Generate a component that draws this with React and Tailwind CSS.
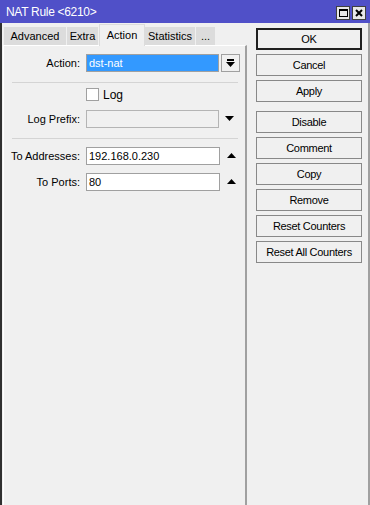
import React from "react";

const buttons = [
  ["OK", true],
  ["Cancel"],
  ["Apply"],
  null,
  ["Disable"],
  ["Comment"],
  ["Copy"],
  ["Remove"],
  ["Reset Counters"],
  ["Reset All Counters"],
];

const tabs = [
  { name: "Advanced", w: "w-[63px]" },
  { name: "Extra", w: "w-[32px]" },
  { name: "Action", w: "w-[46px]", active: true },
  { name: "Statistics", w: "w-[51px]" },
  { name: "...", w: "w-[20px]" },
];

function Up() {
  return (
    <svg width="9" height="6" viewBox="0 0 9 6" className="shrink-0">
      <path d="M0 5 L4.5 0 L9 5 Z" fill="#000" />
    </svg>
  );
}

function Down() {
  return (
    <svg width="9" height="6" viewBox="0 0 9 6" className="shrink-0">
      <path d="M0 0 L9 0 L4.5 5 Z" fill="#000" />
    </svg>
  );
}

function Row({ label, children }) {
  return (
    <div className="flex items-center h-[18px]">
      <div className="w-[77px] shrink-0 text-right pr-[1px] whitespace-nowrap">{label}</div>
      <div className="ml-[5px] flex items-center shrink-0">{children}</div>
    </div>
  );
}

export default function App() {
  return (
    <div
      className="w-[370px] h-[505px] bg-[#f0f0f0] flex flex-col text-[11px] text-black overflow-hidden"
      style={{ fontFamily: '"Liberation Sans", Arial, sans-serif' }}
    >
      {/* Title bar */}
      <div className="h-[23px] bg-[#5050c8] flex items-center justify-between pl-[6px] pr-[4px] shrink-0">
        <span className="text-white text-[12px] tracking-[-0.3px]">NAT Rule &lt;6210&gt;</span>
        <div className="flex gap-[2px] mt-[2px]">
          <div className="w-[14px] h-[14px] bg-[#e8e8e8] border border-[#404040] flex items-center justify-center">
            <div className="w-[9px] h-[8px] border border-black border-t-2" />
          </div>
          <div className="w-[14px] h-[14px] bg-[#e8e8e8] border border-[#404040] flex items-center justify-center">
            <svg width="8" height="8" viewBox="0 0 8 8">
              <path d="M1 1 L7 7 M7 1 L1 7" stroke="#000" strokeWidth="2" />
            </svg>
          </div>
        </div>
      </div>

      <div className="flex-1 flex border-r-2 border-[#a0a0a0]">
        {/* Left column */}
        <div className="w-[247px] shrink-0 flex flex-col border-l-2 border-[#303030]">
          {/* Tabs */}
          <div className="h-[22px] flex items-end pl-[2px] shrink-0">
            {tabs.map((t) =>
              t.active ? (
                <div
                  key={t.name}
                  className={`${t.w} h-[22px] bg-[#f0f0f0] border-t border-l border-r border-[#dcdcdc] flex items-center justify-center pb-[1px] relative -mb-[1px] z-10`}
                >
                  {t.name}
                </div>
              ) : (
                <div
                  key={t.name}
                  className={`${t.w} h-[18px] bg-[#dcdcdc] border-r border-[#f0f0f0] flex items-center justify-center`}
                >
                  {t.name}
                </div>
              )
            )}
          </div>

          {/* Panel */}
          <div className="flex-1 ml-[1px] border-t border-l border-white border-r-2 border-r-[#a0a0a0]">
            <div className="pt-[8px]">
              <Row label="Action:">
                <div className="w-[133px] h-[18px] bg-[#3399ff] border border-[#a0a0a0] text-white pl-[2px] leading-[16px]">
                  dst-nat
                </div>
                <div className="ml-[2px] w-[19px] h-[18px] border border-[#a0a0a0] flex items-center justify-center">
                  <svg width="9" height="9" viewBox="0 0 9 9">
                    <rect x="1" y="0" width="7" height="2" fill="#000" />
                    <path d="M0 3 L9 3 L4.5 8 Z" fill="#000" />
                  </svg>
                </div>
              </Row>

              <div className="h-px bg-[#d4d4d4] mt-[10px] ml-[8px] w-[226px]" />

              <div className="flex items-center mt-[5px] h-[13px]">
                <div className="ml-[82px] w-[13px] h-[13px] bg-white border border-[#a0a0a0]" />
                <span className="ml-[4px] text-[12px]">Log</span>
              </div>

              <div className="mt-[9px]">
                <Row label="Log Prefix:">
                  <div className="w-[133px] h-[18px] bg-[#f0f0f0] border border-[#b4b4b4]" />
                  <div className="ml-[6px]">
                    <Down />
                  </div>
                </Row>
              </div>

              <div className="h-px bg-[#d4d4d4] mt-[10px] ml-[8px] w-[226px]" />

              <div className="mt-[8px] flex flex-col gap-[8px]">
                <Row label="To Addresses:">
                  <div className="w-[134px] h-[18px] bg-white border border-[#a0a0a0] pl-[2px] leading-[16px]">
                    192.168.0.230
                  </div>
                  <div className="ml-[7px]">
                    <Up />
                  </div>
                </Row>
                <Row label="To Ports:">
                  <div className="w-[134px] h-[18px] bg-white border border-[#a0a0a0] pl-[2px] leading-[16px]">
                    80
                  </div>
                  <div className="ml-[7px]">
                    <Up />
                  </div>
                </Row>
              </div>
            </div>
          </div>
        </div>

        {/* Right column buttons */}
        <div className="flex-1 pt-[5px] pl-[9px] pr-[4px] flex flex-col gap-[4px]">
          {buttons.map((b, i) =>
            b === null ? (
              <div key={i} className="h-[1px]" />
            ) : (
              <div
                key={i}
                className={`h-[22px] w-[106px] flex items-center justify-center bg-[#f0f0f0] tracking-[-0.3px] ${
                  b[1] ? "border-2 border-[#202020]" : "border border-[#888888]"
                }`}
              >
                {b[0]}
              </div>
            )
          )}
        </div>
      </div>
    </div>
  );
}
